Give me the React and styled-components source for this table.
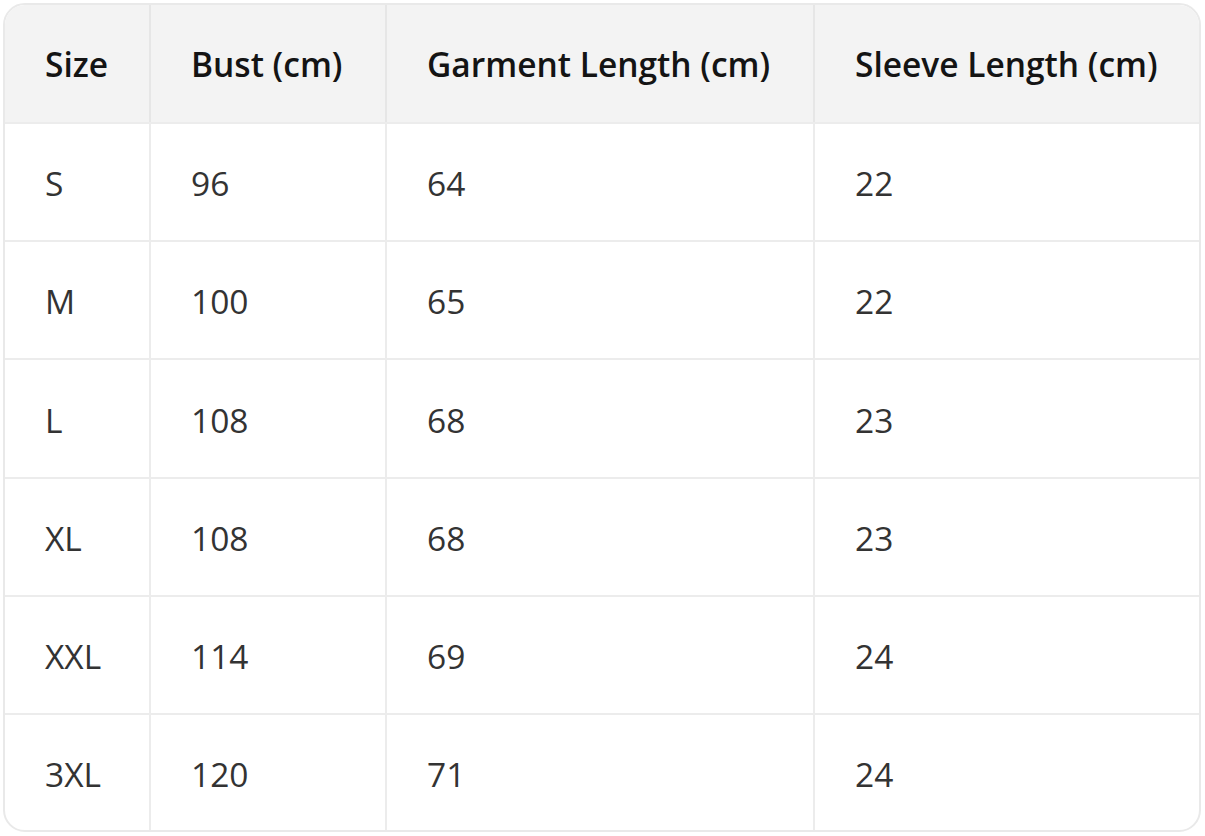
import styled, { createGlobalStyle } from "styled-components"

const sizes = [
  { size: "S", bust: 96, length: 64, sleeve: 22 },
  { size: "M", bust: 100, length: 65, sleeve: 22 },
  { size: "L", bust: 108, length: 68, sleeve: 23 },
  { size: "XL", bust: 108, length: 68, sleeve: 23 },
  { size: "XXL", bust: 114, length: 69, sleeve: 24 },
  { size: "3XL", bust: 120, length: 71, sleeve: 24 },
]

export default function App() {
  return (
    <>
      <GlobalStyle />
      <Frame>
        <Table>
          <colgroup>
            <col style={{ width: 145 }} />
            <col style={{ width: 236 }} />
            <col style={{ width: 428 }} />
            <col />
          </colgroup>
          <thead>
            <tr>
              <HeadCell>Size</HeadCell>
              <HeadCell>Bust (cm)</HeadCell>
              <HeadCell>Garment Length (cm)</HeadCell>
              <HeadCell>Sleeve Length (cm)</HeadCell>
            </tr>
          </thead>
          <tbody>
            {sizes.map((row) => (
              <Row key={row.size}>
                <Cell>{row.size}</Cell>
                <Cell>{row.bust}</Cell>
                <Cell>{row.length}</Cell>
                <Cell>{row.sleeve}</Cell>
              </Row>
            ))}
          </tbody>
        </Table>
      </Frame>
    </>
  )
}

const GlobalStyle = createGlobalStyle`
  body {
    margin: 0;
    background: #ffffff;
    font-family: "Open Sans", "Noto Sans", sans-serif;
  }
`

const Frame = styled.div`
  margin: 3px;
  width: 1198px;
  height: 829px;
  box-sizing: border-box;
  border: 2px solid #e9e9e9;
  border-radius: 22px;
  overflow: hidden;
`

const Table = styled.table`
  width: 100%;
  height: 100%;
  border-collapse: collapse;
  table-layout: fixed;
`

const HeadCell = styled.th`
  height: 117px;
  padding: 0 0 0 40px;
  background: #f3f3f3;
  border-right: 2px solid #e6e6e6;
  border-bottom: 2px solid #ececec;
  text-align: left;
  font-size: 33.5px;
  font-weight: 600;
  color: #141414;
  white-space: nowrap;

  &:last-child {
    border-right: none;
  }
`

const Row = styled.tr`
  &:last-child td {
    border-bottom: none;
  }
`

const Cell = styled.td`
  padding: 2px 0 0 40px;
  border-right: 2px solid #ececec;
  border-bottom: 2px solid #ececec;
  font-size: 33.5px;
  font-weight: 400;
  color: #333333;

  &:last-child {
    border-right: none;
  }
`
